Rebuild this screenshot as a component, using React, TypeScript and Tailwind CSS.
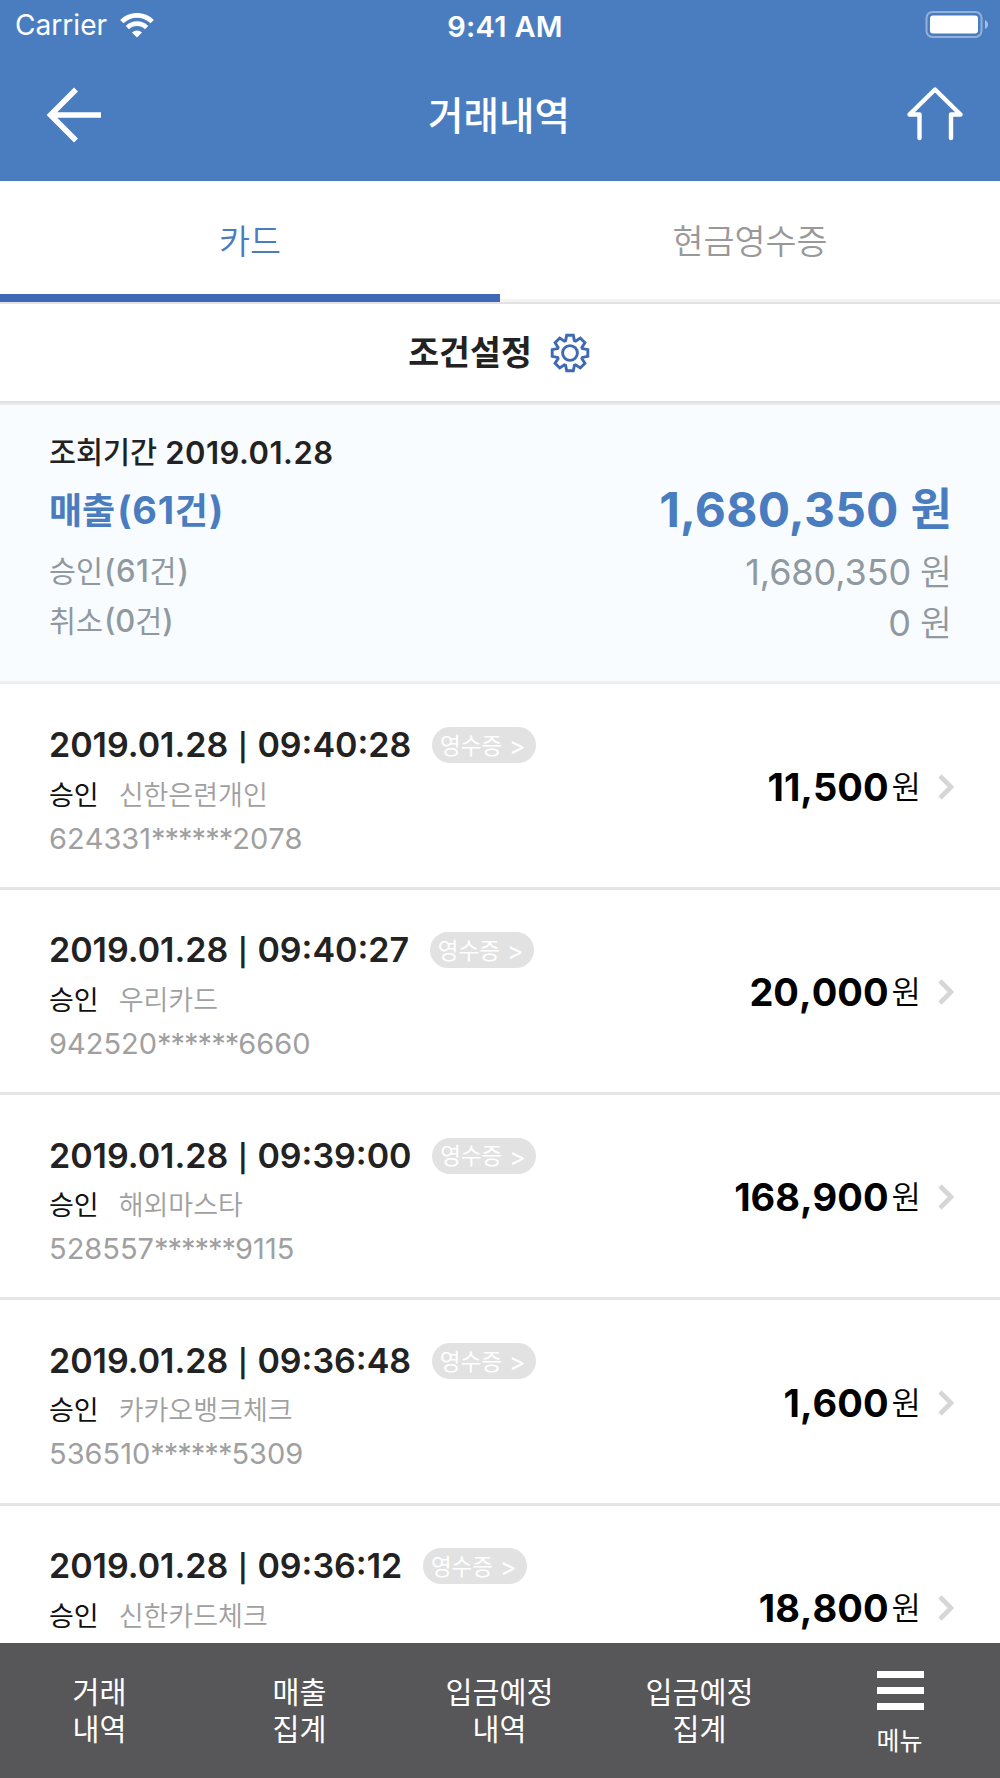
type Transaction = {
    time: string
    card: string
    prefix: string
    suffix: string
    amount: string
}

const transactions: Transaction[] = [
    { time: '09:40:28', card: '신한은련개인', prefix: '624331', suffix: '2078', amount: '11,500' },
    { time: '09:40:27', card: '우리카드', prefix: '942520', suffix: '6660', amount: '20,000' },
    { time: '09:39:00', card: '해외마스타', prefix: '528557', suffix: '9115', amount: '168,900' },
    { time: '09:36:48', card: '카카오뱅크체크', prefix: '536510', suffix: '5309', amount: '1,600' },
    { time: '09:36:12', card: '신한카드체크', prefix: '', suffix: '', amount: '18,800' },
]

const navItems = [
    ['거래', '내역'],
    ['매출', '집계'],
    ['입금예정', '내역'],
    ['입금예정', '집계'],
]

function WifiIcon() {
    return (
        <svg width="34" height="25" viewBox="0 0 34 25" fill="none" stroke="white">
            <path d="M1.8 8.6A21.6 21.6 0 0 1 32.2 8.6" strokeWidth="4.8" />
            <path d="M7.4 14.6A13.6 13.6 0 0 1 26.6 14.6" strokeWidth="4.6" />
            <path d="M17 24.5L12 19.4A7.2 7.2 0 0 1 22 19.4Z" fill="white" stroke="none" />
        </svg>
    )
}

function BatteryIcon() {
    return (
        <svg width="64" height="28" viewBox="0 0 64 28" fill="none">
            <rect x="1.5" y="1" width="55" height="25" rx="6" stroke="white" strokeOpacity="0.4" strokeWidth="2" />
            <rect x="5" y="4.5" width="48" height="18" rx="3" fill="white" />
            <path d="M60 9Q63 10.5 63 13.5T60 18Z" fill="white" fillOpacity="0.5" />
        </svg>
    )
}

function GearIcon() {
    const teeth = [0, 45, 90, 135, 180, 225, 270, 315]
    const corners = [[-4.4, -12.4], [-3.3, -17.8], [3.3, -17.8], [4.4, -12.4]]
    const points = teeth
        .flatMap((deg) => {
            const a = (deg * Math.PI) / 180
            return corners.map(([x, y]) =>
                `${(x * Math.cos(a) - y * Math.sin(a)).toFixed(2)},${(x * Math.sin(a) + y * Math.cos(a)).toFixed(2)}`
            )
        })
        .join(' ')

    return (
        <svg width="40" height="40" viewBox="-20 -20 40 40" fill="none" stroke="#3f69b5" strokeWidth="2.9">
            <polygon points={points} />
            <circle r="7.4" />
        </svg>
    )
}

function TransactionRow({ item }: { item: Transaction }) {
    return (
        <div className="flex h-[205.3px] shrink-0 justify-between border-b-3 border-[#e6e6e6] pl-[49px] pr-[46px]">
            <div className="pt-[37.5px]">
                <div className="flex h-[46px] items-center">
                    <span className="text-[34px] font-semibold text-[#222]">
                        2019.01.28 <span className="inline-block w-[12px] text-center text-[27px]">|</span> {item.time}
                    </span>
                    <span className="ml-[20.5px] flex h-9 w-[104px] items-center justify-center gap-[7px] rounded-full bg-[#e2e2e2] pt-[2px] pr-[2px] text-[22.5px] text-white">
                        영수증 <span className="pt-[1px] text-[25px]">&gt;</span>
                    </span>
                </div>
                <div className="flex h-[54px] items-center text-[27px]">
                    <span className="text-[#111]">승인</span>
                    <span className="ml-[20px] font-[350] text-[#a0a0a0]">{item.card}</span>
                </div>
                {item.prefix && (
                    <div className="flex h-[32px] items-center text-[29px] text-[#a0a0a0] [font-kerning:none]">
                        {item.prefix}
                        <span className="tracking-[-1px]">******</span>
                        {item.suffix}
                    </div>
                )}
            </div>
            <div className="flex items-center pt-[2px]">
                <div className="flex items-baseline text-black">
                    <span className="text-[38px] font-bold [font-kerning:none]">{item.amount}</span>
                    <span className="relative -top-[2px] ml-[3px] text-[32px] font-[350]">원</span>
                </div>
                <svg className="ml-[17px]" width="16" height="26" viewBox="0 0 16 26" fill="none" stroke="#d6d6d6" strokeWidth="4.6">
                    <path d="M2 2L13 13L2 24" />
                </svg>
            </div>
        </div>
    )
}

export default function App() {
    return (
        <div className="flex h-[1778px] w-[1000px] flex-col overflow-hidden bg-white font-['Inter','Noto_Sans_CJK_KR',sans-serif] leading-none whitespace-nowrap">
            {/* Header */}
            <header className="h-[181px] shrink-0 bg-[#4a7dbf] text-white">
                <div className="grid h-[50px] grid-cols-3 items-center pl-[15px] pr-[11px]">
                    <div className="flex items-center gap-[13px]">
                        <span className="pt-[1px] text-[28.1px]">Carrier</span>
                        <WifiIcon />
                    </div>
                    <span className="pt-[3px] pl-[6px] text-center text-[29px] font-semibold tracking-[0.3px]">9:41 AM</span>
                    <div className="flex justify-end">
                        <BatteryIcon />
                    </div>
                </div>
                <div className="flex h-[129px] items-center justify-between pl-[46px] pr-[36px]">
                    <svg width="56" height="56" viewBox="0 0 56 56" fill="none" stroke="white" strokeWidth="5.5">
                        <path d="M30 2.5L4.5 28L30 53.5M5 28H55" />
                    </svg>
                    <h1 className="pt-[3px] pr-[10px] text-[38.6px] font-medium">거래내역</h1>
                    <svg width="58" height="56" viewBox="0 0 58 56" fill="none" stroke="white" strokeWidth="4.4" strokeLinecap="round" strokeLinejoin="round">
                        <path d="M13.5 51V27.5H3.5L29 2.5L54.5 27.5H45V51" />
                    </svg>
                </div>
            </header>

            {/* Tabs */}
            <nav className="flex h-[123px] shrink-0 border-b-2 border-[#e2e2e2] text-[33.7px] font-[350]">
                <div className="flex flex-1 items-center justify-center border-b-8 border-[#3f69b5] pt-[9px] text-[#4a7dbf]">카드</div>
                <div className="flex flex-1 items-center justify-center border-b-3 border-[#f3f3f3] pt-[4px] text-[#999]">현금영수증</div>
            </nav>

            <div className="flex h-[99px] shrink-0 items-center justify-center gap-[18px] border-b-2 border-[#e2e2e2] pr-[2px] text-[33.6px] font-semibold text-[#222]">
                <span className="pt-[1px]">조건설정</span>
                <GearIcon />
            </div>

            {/* Summary */}
            <section className="flex h-[281px] shrink-0 justify-between border-t-2 border-b-3 border-t-[#ebebeb] border-b-[#eceeef] bg-[#f9fcff] pl-[49px] pr-[48px] pt-[22px] text-[#8f999f]">
                <div>
                    <div className="flex h-[50px] items-center gap-[8px] font-medium text-[#222]">
                        <span className="pt-[1px] text-[29.4px]">조회기간</span>
                        <span className="text-[31px] font-semibold tracking-[0.5px]">2019.01.28</span>
                    </div>
                    <div className="flex h-[66px] items-baseline text-[36px] leading-[66px] font-bold text-[#4a7dbf]">
                        매출<span className="ml-[2px] text-[38px] tracking-[0.7px]">(61</span>건<span className="ml-[1px] text-[38px]">)</span>
                    </div>
                    <div className="flex h-[55px] items-baseline text-[29.3px] leading-[55px]">
                        승인<span className="ml-[1px] text-[31px] font-medium tracking-[0.6px]">(61</span>건<span className="ml-[1px] text-[31px] font-medium">)</span>
                    </div>
                    <div className="flex h-[46px] items-baseline text-[29.3px] leading-[46px]">
                        취소<span className="ml-[1px] text-[31px] font-medium">(0</span>건<span className="text-[31px] font-medium">)</span>
                    </div>
                </div>
                <div className="pt-[50px]">
                    <div className="flex h-[65px] items-baseline justify-end gap-[12px] leading-[65px] font-bold text-[#4a7dbf]">
                        <span className="text-[48px] tracking-[0.2px]">1,680,350</span>
                        <span className="relative -top-[1px] text-[45px]">원</span>
                    </div>
                    <div className="flex h-[61px] items-baseline justify-end gap-[9px] text-[36px] leading-[61px]">
                        <span className="tracking-[-0.1px]">1,680,350</span>
                        <span className="text-[34.7px] font-[350]">원</span>
                    </div>
                    <div className="flex h-[41px] items-baseline justify-end gap-[9px] text-[36px] leading-[41px]">
                        0<span className="text-[34.7px] font-[350]">원</span>
                    </div>
                </div>
            </section>

            {/* Transactions */}
            <main className="flex min-h-0 flex-1 flex-col overflow-hidden pt-[0.6px]">
                {transactions.map((item) => (
                    <TransactionRow key={item.time} item={item} />
                ))}
            </main>

            {/* Bottom navigation */}
            <footer className="grid h-[135.5px] shrink-0 grid-cols-5 bg-[#575759] text-center text-white">
                {navItems.map(([top, bottom]) => (
                    <div key={top + bottom} className="pt-[31px] pr-[1px] text-[29.3px] leading-[37.3px]">
                        <div>{top}</div>
                        <div>{bottom}</div>
                    </div>
                ))}
                <div className="flex flex-col items-center pt-[28.5px]">
                    <div className="flex w-[47px] flex-col gap-[9px]">
                        <span className="h-[7px] bg-white" />
                        <span className="h-[7px] bg-white" />
                        <span className="h-[7px] bg-white" />
                    </div>
                    <span className="mt-[19px] pr-[1px] text-[25px]">메뉴</span>
                </div>
            </footer>
        </div>
    )
}
